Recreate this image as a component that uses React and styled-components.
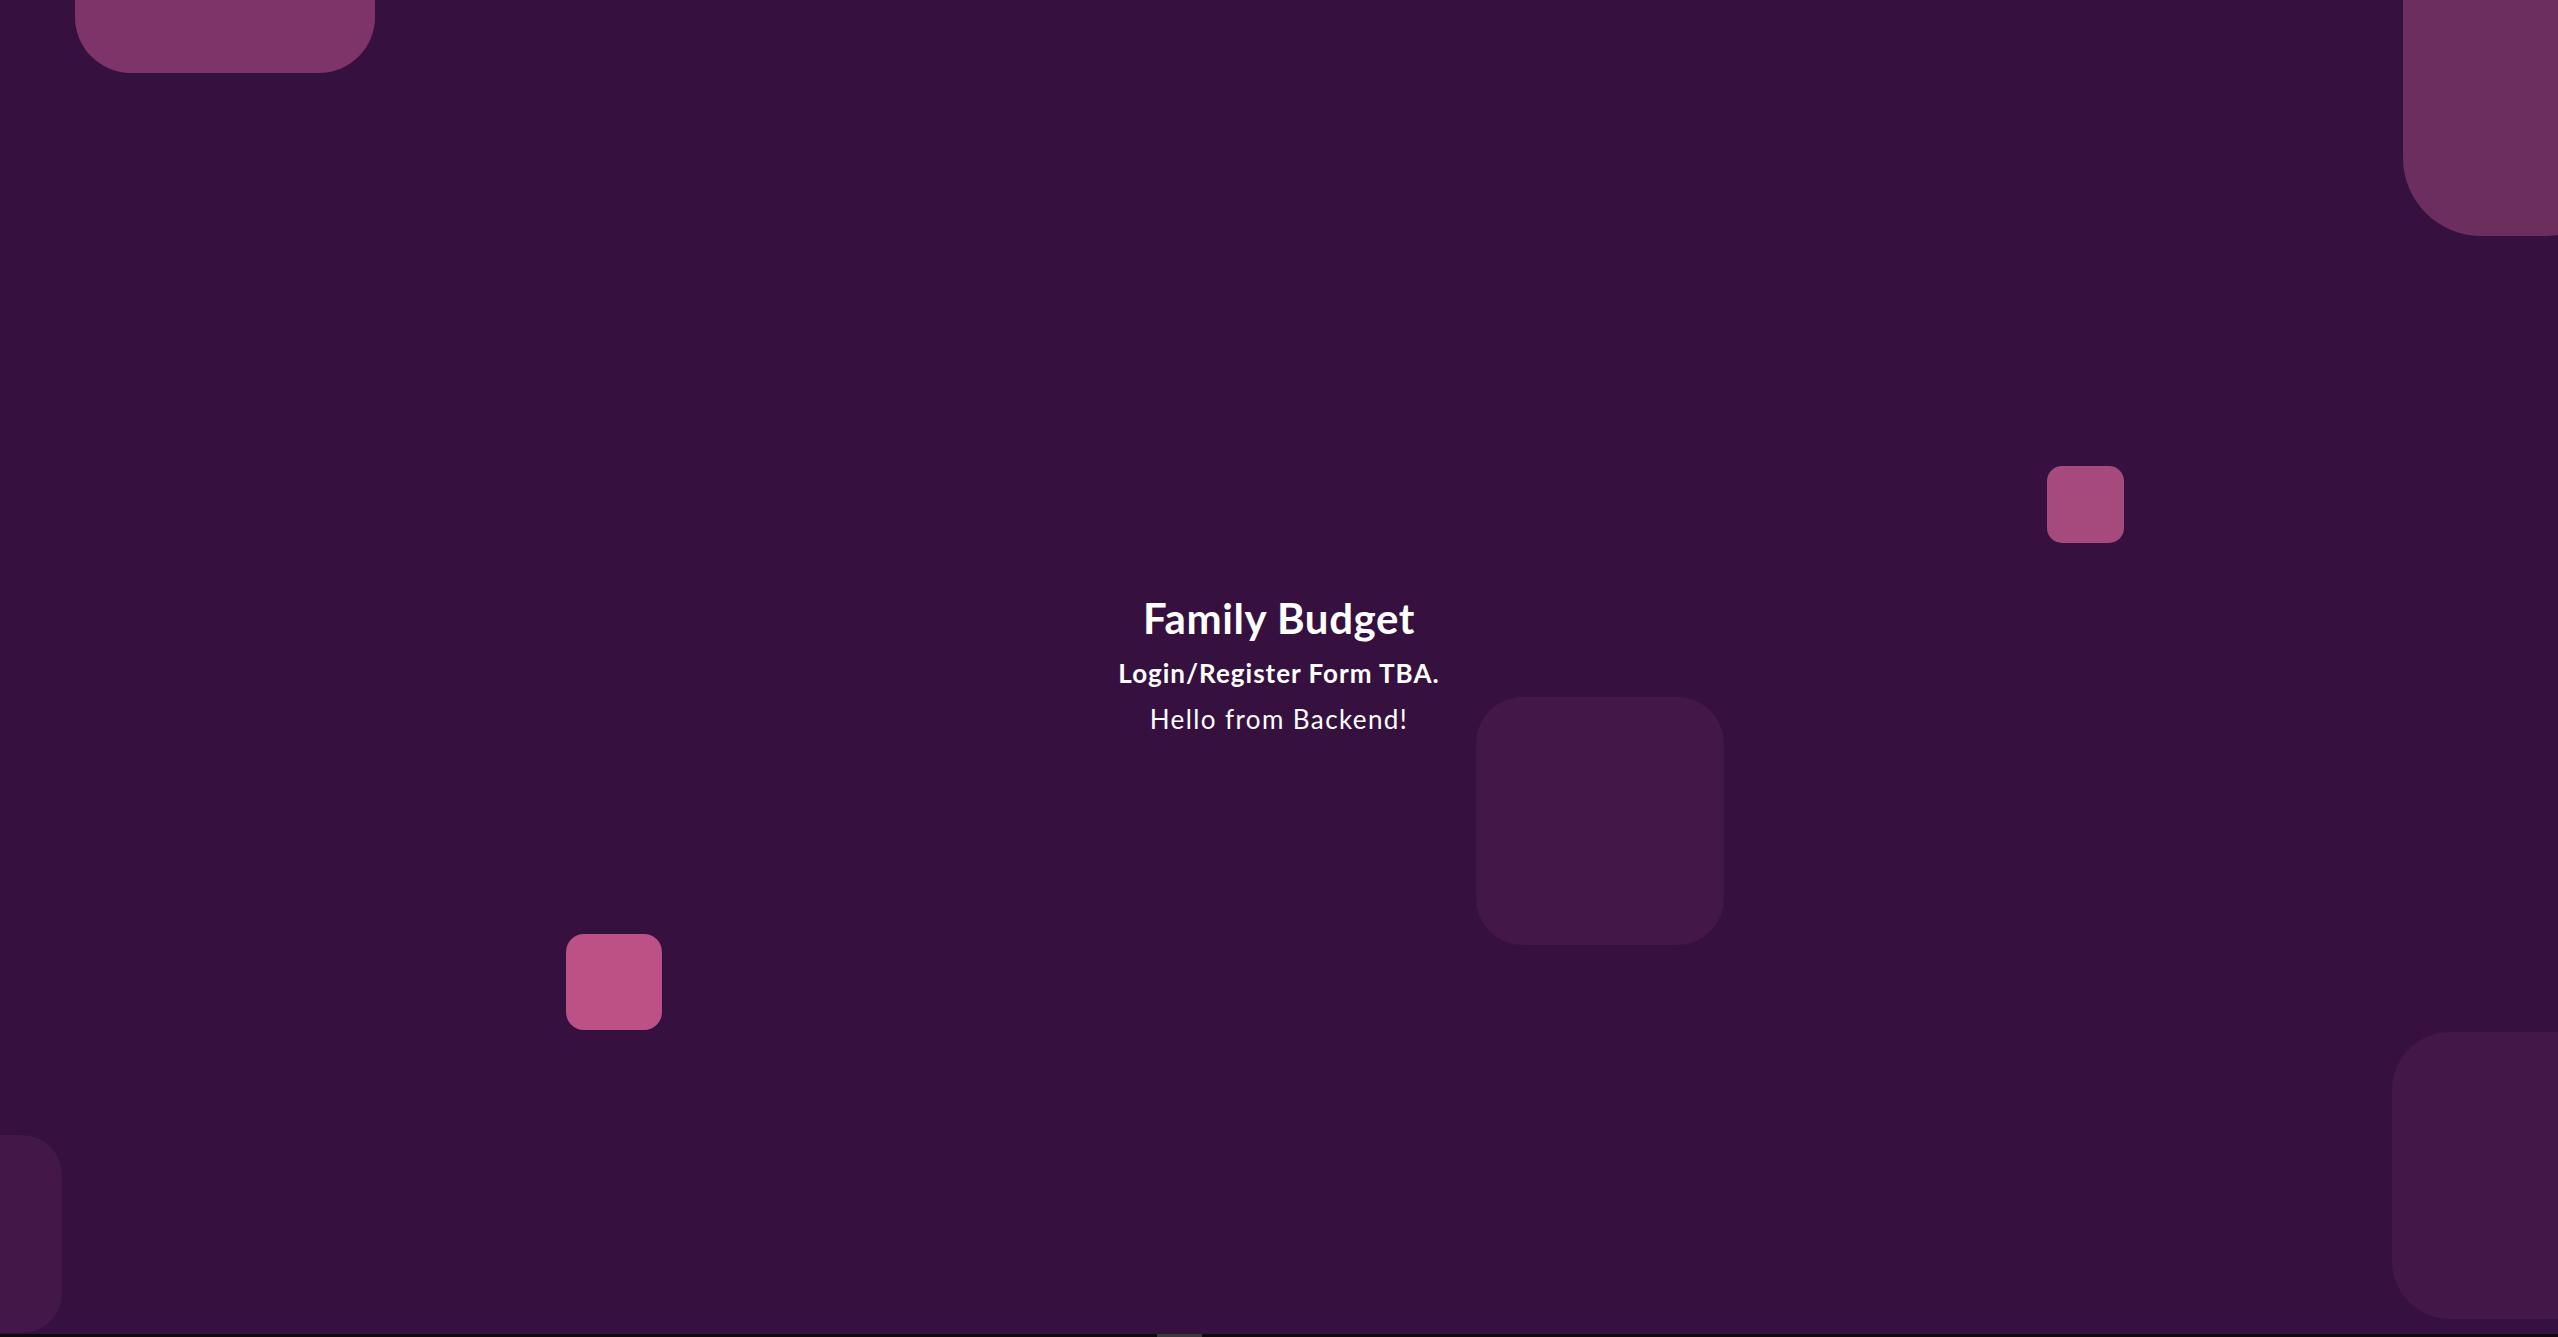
import React from "react";
import styled, { createGlobalStyle } from "styled-components";

const GlobalStyle = createGlobalStyle`
  html, body {
    margin: 0;
    padding: 0;
    background: #0e0a10;
    overflow: hidden;
  }
  * {
    box-sizing: border-box;
  }
`;

const Page = styled.main`
  position: relative;
  height: calc(100vh - 3px);
  background: #36113f;
  overflow: hidden;
  display: flex;
  align-items: center;
  justify-content: center;
  font-family: "Lato", "Noto Sans", sans-serif;
  color: #ffffff;
`;

const Tile = styled.div`
  position: absolute;
  left: ${(p) => p.$x}px;
  top: ${(p) => p.$y}px;
  width: ${(p) => p.$w}px;
  height: ${(p) => p.$h}px;
  border-radius: ${(p) => p.$r}px;
  background: ${(p) => p.$color};
`;

const Content = styled.section`
  position: relative;
  z-index: 1;
  display: flex;
  flex-direction: column;
  align-items: center;
  text-align: center;
  padding-bottom: 6px;
`;

const Title = styled.h1`
  margin: 0 0 14px;
  font-size: 42px;
  font-weight: 700;
  letter-spacing: 0.6px;
`;

const Subtitle = styled.p`
  margin: 0 0 14px;
  font-size: 26px;
  font-weight: 700;
  letter-spacing: 1px;
`;

const Message = styled.p`
  margin: 0;
  font-size: 26px;
  font-weight: 400;
  letter-spacing: 1.4px;
`;

const Strip = styled.div`
  height: 3px;
  background: #0e0a10;
  position: relative;
`;

const Thumb = styled.div`
  position: absolute;
  left: 1157px;
  top: 0;
  width: 45px;
  height: 3px;
  background: #3a3a3a;
`;

const tiles = [
  { x: 75, y: -227, w: 300, h: 300, r: 56, color: "#7e3468" },
  { x: 2403, y: -164, w: 220, h: 400, r: 78, color: "#6c2d5f" },
  { x: 1476, y: 697, w: 248, h: 248, r: 47, color: "#431747" },
  { x: 2047, y: 466, w: 77, h: 77, r: 15, color: "#a6497c" },
  { x: 566, y: 934, w: 96, h: 96, r: 18, color: "#bb5185" },
  { x: -138, y: 1135, w: 200, h: 198, r: 40, color: "#431747" },
  { x: 2392, y: 1032, w: 260, h: 287, r: 58, color: "#431747" },
];

export default function App() {
  return (
    <>
      <GlobalStyle />
      <Page>
        {tiles.map((t, i) => (
          <Tile key={i} $x={t.x} $y={t.y} $w={t.w} $h={t.h} $r={t.r} $color={t.color} />
        ))}
        <Content>
          <Title>Family Budget</Title>
          <Subtitle>Login/Register Form TBA.</Subtitle>
          <Message>Hello from Backend!</Message>
        </Content>
      </Page>
      <Strip>
        <Thumb />
      </Strip>
    </>
  );
}
